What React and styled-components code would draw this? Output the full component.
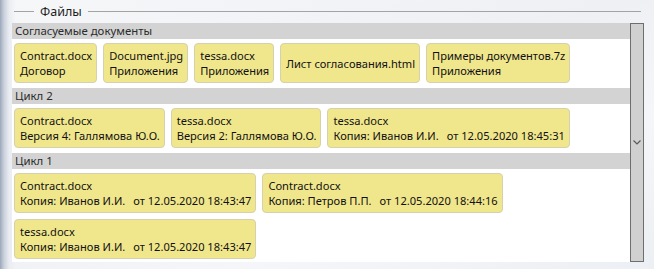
import React from "react";
import styled, { createGlobalStyle } from "styled-components";

const GlobalStyle = createGlobalStyle`
  html, body {
    margin: 0;
    padding: 0;
  }
  body {
    width: 654px;
    height: 269px;
    overflow: hidden;
    font-family: "Noto Sans", "Open Sans", sans-serif;
    background:
      linear-gradient(90deg, #9ba8ba 0px, #c9d1dc 4px, #e9ecf1 9px, rgba(244,245,248,0) 16px),
      linear-gradient(160deg, #f6f7f9 0%, #eef0f4 45%, #f5f6f9 70%, #eceff3 100%);
  }
`;

const Page = styled.div`
  display: flex;
  flex-direction: column;
  padding: 3px 10px 0 12px;
`;

const Legend = styled.div`
  display: flex;
  align-items: center;
  height: 17px;
  margin: 0 3px 3px 2px;
  gap: 6px;
`;

const Rule = styled.div`
  height: 1px;
  background: #a3a3a3;
  flex: ${(p) => (p.$grow ? 1 : "none")};
  width: ${(p) => (p.$grow ? "auto" : "20px")};
`;

const LegendText = styled.span`
  font-size: 12.5px;
  color: #1e1e1e;
  padding: 0 0 1px;
`;

const Body = styled.div`
  display: flex;
  height: 239px;
`;

const Panel = styled.div`
  flex: 1;
  background: #ffffff;
  overflow: hidden;
`;

const GroupHeader = styled.div`
  height: 16px;
  line-height: 16px;
  background: #d3d3d3;
  color: #2b2b2b;
  font-size: 11.4px;
  padding-left: 3px;
`;

const Chips = styled.div`
  display: flex;
  flex-wrap: wrap;
  gap: 6px;
  padding: 4px 0 5px 2px;
`;

const Chip = styled.div`
  display: flex;
  flex-direction: column;
  justify-content: center;
  box-sizing: border-box;
  min-height: 39px;
  padding: 4px 4px 4px 5px;
  background: #f0e68c;
  border: 1px solid #d5d1ad;
  border-radius: 4px;
  font-size: 11.1px;
  line-height: 15px;
  color: #111;
  white-space: nowrap;
`;

const Gap = styled.span`
  display: inline-block;
  width: ${(p) => p.$w || 8}px;
`;

const Scrollbar = styled.div`
  width: 14px;
  box-sizing: border-box;
  background: #d0d0d0;
  border: 1px solid #6e6e6e;
  display: flex;
  align-items: center;
  justify-content: center;
`;

const groups = [
  {
    title: "Согласуемые документы",
    items: [
      ["Contract.docx", "Договор"],
      ["Document.jpg", "Приложения"],
      ["tessa.docx", "Приложения"],
      ["Лист согласования.html"],
      ["Примеры документов.7z", "Приложения"],
    ],
  },
  {
    title: "Цикл 2",
    items: [
      ["Contract.docx", "Версия 4: Галлямова Ю.О."],
      ["tessa.docx", "Версия 2: Галлямова Ю.О."],
      ["tessa.docx", "Копия: Иванов И.И.", "от 12.05.2020 18:45:31"],
    ],
  },
  {
    title: "Цикл 1",
    items: [
      ["Contract.docx", "Копия: Иванов И.И.", "от 12.05.2020 18:43:47"],
      ["Contract.docx", "Копия: Петров П.П.", "от 12.05.2020 18:44:16"],
      ["tessa.docx", "Копия: Иванов И.И.", "от 12.05.2020 18:43:47"],
    ],
  },
];

const App = () => {
  return (
    <>
      <GlobalStyle />
      <Page>
        <Legend>
          <Rule />
          <LegendText>Файлы</LegendText>
          <Rule $grow />
        </Legend>
        <Body>
          <Panel>
            {groups.map((g) => (
              <div key={g.title}>
                <GroupHeader>{g.title}</GroupHeader>
                <Chips>
                  {g.items.map(([name, sub, date], i) => (
                    <Chip key={i}>
                      <div>{name}</div>
                      {sub && (
                        <div>
                          {sub}
                          {date && (
                            <>
                              <Gap />
                              {date}
                            </>
                          )}
                        </div>
                      )}
                    </Chip>
                  ))}
                </Chips>
              </div>
            ))}
          </Panel>
          <Scrollbar>
            <svg width="8" height="5" viewBox="0 0 8 5">
              <path d="M0.5 0.5 L4 4 L7.5 0.5" fill="none" stroke="#5a5a5a" strokeWidth="1.2" />
            </svg>
          </Scrollbar>
        </Body>
      </Page>
    </>
  );
};

export default App;
